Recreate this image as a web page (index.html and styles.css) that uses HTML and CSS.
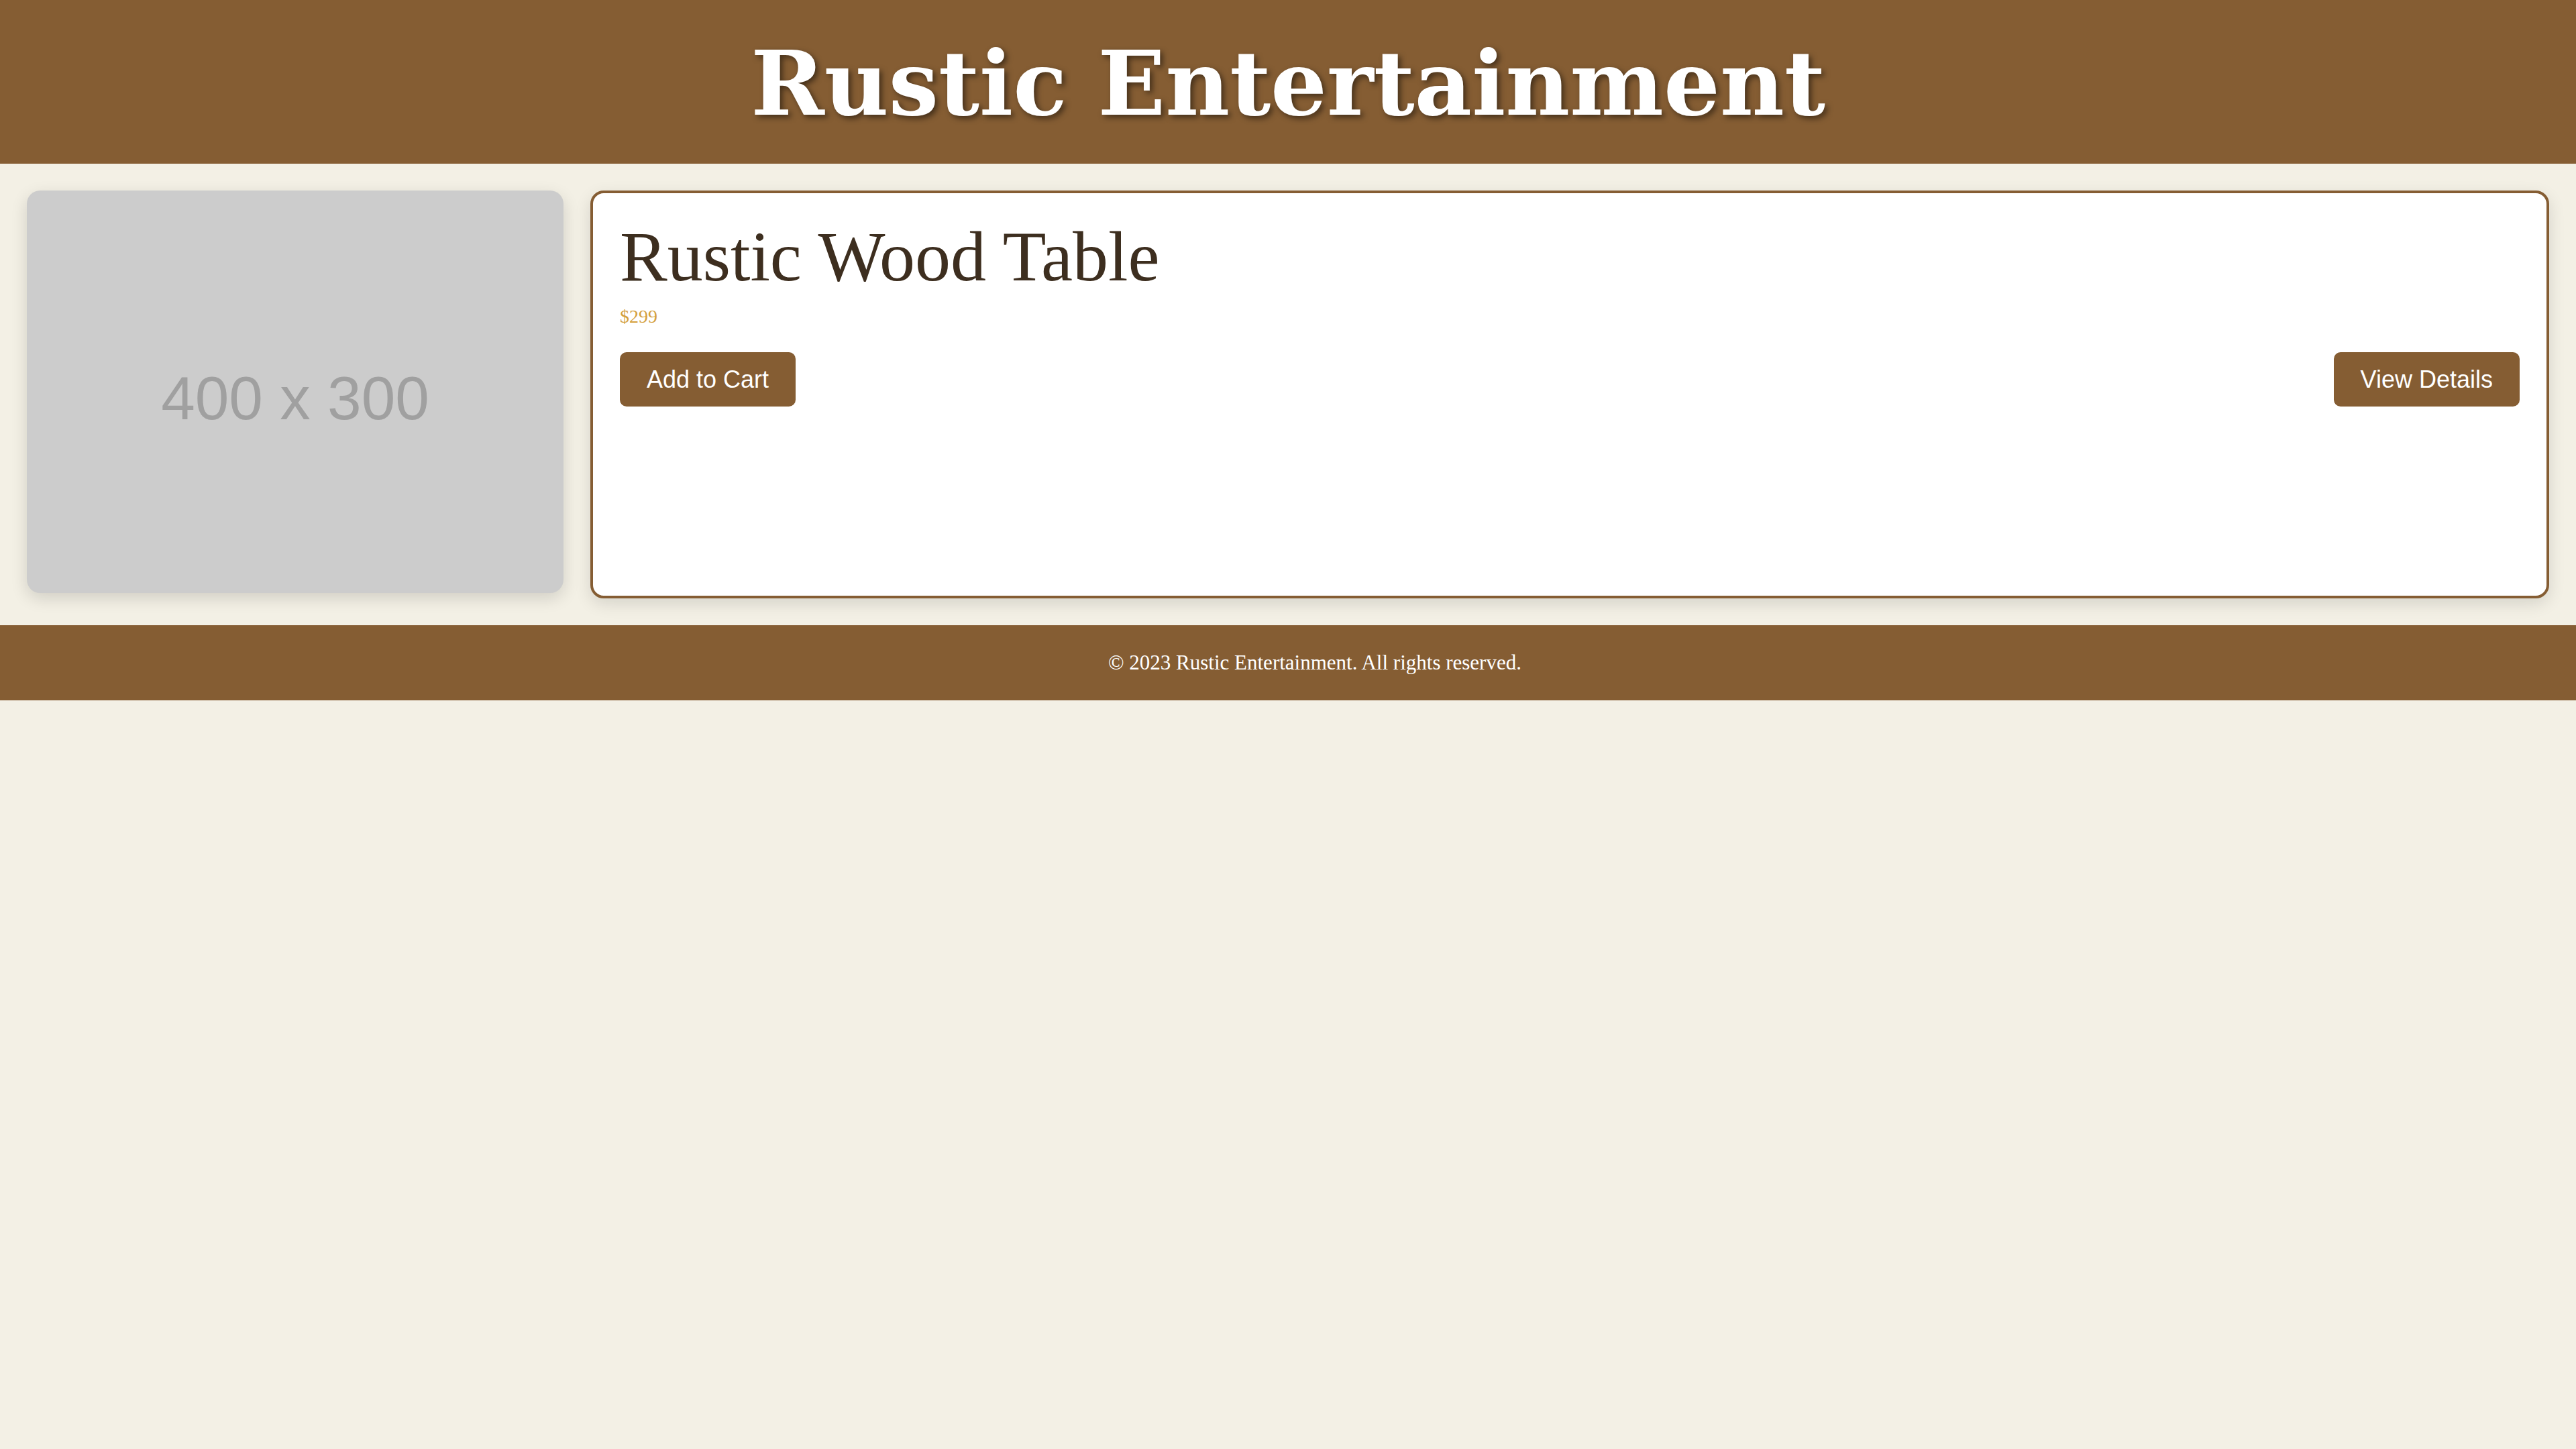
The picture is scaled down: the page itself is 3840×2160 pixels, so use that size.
FILE: index.html
```html
<!DOCTYPE html>
<html lang="en">
<head>
<meta charset="utf-8">
<title>Rustic Entertainment</title>
<link rel="stylesheet" href="styles.css">
</head>
<body>
<header class="site-header">
  <h1 class="site-title">Rustic Entertainment</h1>
</header>
<main class="product">
  <div class="product-media"><div class="placeholder"><span class="placeholder-text">400 x 300</span></div></div>
  <section class="product-card">
    <h2 class="product-name">Rustic Wood Table</h2>
    <p class="product-price">$299</p>
    <div class="product-actions">
      <button class="btn" type="button">Add to Cart</button>
      <button class="btn" type="button">View Details</button>
    </div>
  </section>
</main>
<footer class="site-footer">
  <p class="copyright">© 2023 Rustic Entertainment. All rights reserved.</p>
</footer>
</body>
</html>
```

FILE: styles.css
```css
html, body {
  margin: 0;
  padding: 0;
}
body {
  background: #f3f0e5;
  font-family: "Liberation Serif", "DejaVu Serif", serif;
  font-size: 32px;
  color: #3d2e1f;
  min-height: 2160px;
}
.site-header {
  background: #855d33;
  padding: 43px 0 37px;
  text-align: center;
}
.site-title {
  margin: 0;
  font-family: "DejaVu Serif", "Liberation Serif", serif;
  font-weight: bold;
  font-size: 132px;
  line-height: 164px;
  color: #ffffff;
  text-shadow: 4px 4px 8px rgba(0, 0, 0, 0.5);
}
.product {
  display: grid;
  grid-template-columns: 800px 1fr;
  column-gap: 40px;
  padding: 40px;
}
.product-media {
  font-size: 32px;
  line-height: normal;
}
.placeholder {
  display: inline-block;
  overflow: hidden;
  width: 800px;
  height: 600px;
  background: #cccccc;
  border-radius: 20px;
  box-shadow: 0 8px 24px rgba(0, 0, 0, 0.14);
  vertical-align: baseline;
  text-align: center;
}
.placeholder-text {
  display: block;
  padding-top: 10px;
  line-height: 600px;
  font-family: "Liberation Sans", Arial, sans-serif;
  font-size: 91px;
  color: #a0a0a0;
}
.product-card {
  background: #ffffff;
  border: 4px solid #855d33;
  border-radius: 20px;
  box-shadow: 0 8px 24px rgba(0, 0, 0, 0.12);
  padding: 40px;
}
.product-name {
  margin: 0;
  font-weight: normal;
  font-size: 106px;
  line-height: 109px;
  color: #3d2e1f;
}
.product-price {
  margin: 20px 0 0;
  font-size: 28px;
  line-height: 30px;
  color: #d4a03c;
}
.product-actions {
  display: flex;
  justify-content: space-between;
  margin-top: 38px;
}
.btn {
  font-family: "Liberation Sans", Arial, sans-serif;
  font-size: 36px;
  line-height: 41px;
  padding: 20px 40px;
  border: 0;
  border-radius: 10px;
  background: #855d33;
  color: #ffffff;
  cursor: pointer;
}
.site-footer {
  background: #855d33;
  padding: 40px 0 40px 80px;
  text-align: center;
}
.copyright {
  margin: 0;
  font-size: 31px;
  line-height: 32px;
  color: #ffffff;
}
```
